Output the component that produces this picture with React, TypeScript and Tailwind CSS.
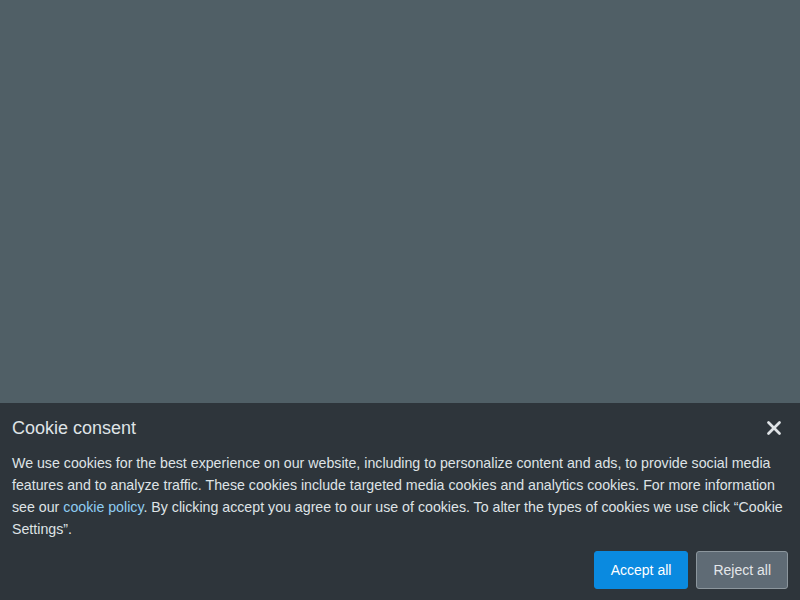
import { X } from "lucide-react";

const App = () => {
  return (
    <div className="flex flex-col h-screen bg-[#505f66] font-['Liberation_Sans',Arial,sans-serif]">
      <div className="flex-1" />
      <section className="bg-[#2e353b] pl-3 pr-3 pt-[13px] pb-[11px]">
        <div className="flex items-center justify-between h-6">
          <h2 className="text-[18px] leading-6 text-[#dfe3e6]">Cookie consent</h2>
          <button className="text-[#dfe3e6] mr-[3px]">
            <X size={22} strokeWidth={3} />
          </button>
        </div>
        <p className="mt-3 -mr-2 text-[14.2px] leading-[22px] text-[#dfe3e6]">
          We use cookies for the best experience on our website, including to personalize content and ads, to
          provide social media features and to analyze traffic. These cookies include targeted media cookies and
          analytics cookies. For more information see our{" "}
          <a className="text-[#8fcdf2]">cookie policy</a>. By clicking accept you agree to our use of cookies. To
          alter the types of cookies we use click “Cookie Settings”.
        </p>
        <div className="flex justify-end gap-2 mt-[11px]">
          <button className="h-[38px] px-4 text-sm rounded-[3px] border border-[#0a8ae0] bg-[#0a8ae0] text-white">
            Accept all
          </button>
          <button className="h-[38px] px-4 text-sm rounded-[3px] border border-[#8c969d] bg-[#5f6b75] text-[#e4e7ea]">
            Reject all
          </button>
        </div>
      </section>
    </div>
  );
};

export default App;
